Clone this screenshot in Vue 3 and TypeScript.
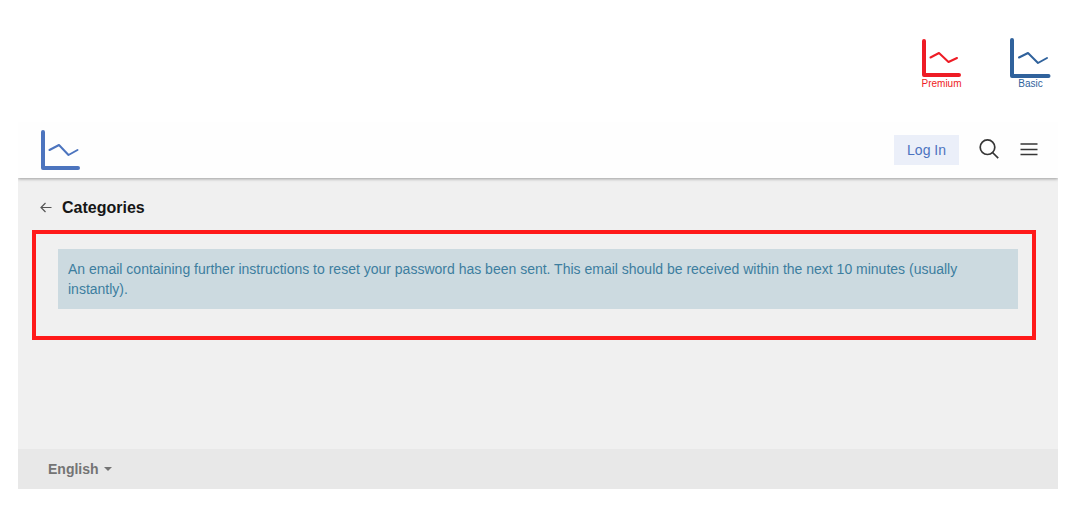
<script setup lang="ts">
import { ref } from 'vue'

interface Edition {
  name: string
  tone: string
  axes: string
  trend: string
}

const editions: Edition[] = [
  {
    name: 'Premium',
    tone: 'premium',
    axes: 'M3 3V37H38',
    trend: 'M9.5 19.5 18 15 27.5 24 36 20',
  },
  {
    name: 'Basic',
    tone: 'basic',
    axes: 'M2 2V38H38.5',
    trend: 'M9 19.5 18 15 28 25 37 20',
  },
]

const language = ref('English')
</script>

<template>
  <div class="page">
    <div class="editions">
      <figure v-for="e in editions" :key="e.name" class="edition" :class="e.tone">
        <svg class="chart" viewBox="0 0 41 41" aria-hidden="true">
          <path class="axes" :d="e.axes" />
          <path class="trend" :d="e.trend" />
        </svg>
        <figcaption>{{ e.name }}</figcaption>
      </figure>
    </div>

    <div class="site">
      <header class="bar">
        <a class="brand" href="#" aria-label="Home">
          <svg class="chart" viewBox="0 0 41 41" aria-hidden="true">
            <path class="axes" d="M2 2V38H37" />
            <path class="trend" d="M8.5 20 18 15 27.5 25 36.5 20" />
          </svg>
        </a>
        <div class="actions">
          <button class="login" type="button">Log In</button>
          <button class="icon" type="button" aria-label="Search">
            <svg viewBox="0 0 20 20" aria-hidden="true">
              <circle cx="8.5" cy="7.2" r="7.3" />
              <path d="M13.5 12.5 19.2 18.2" />
            </svg>
          </button>
          <button class="icon menu" type="button" aria-label="Menu">
            <svg viewBox="0 0 20 20" aria-hidden="true">
              <path d="M1.5 4H18.5M1.5 9.5H18.5M1.5 14.500H18.5" />
            </svg>
          </button>
        </div>
      </header>

      <main class="content">
        <div class="heading">
          <a class="back" href="#" aria-label="Back">
            <svg viewBox="0 0 12 12" aria-hidden="true">
              <path d="M11.5 5.5H1.500M5.500 1 1 5.500 5.500 10" />
            </svg>
          </a>
          <h1>Categories</h1>
        </div>
        <section class="highlight">
          <p class="notice" role="status">
            An email containing further instructions to reset your password has been sent. This
            email should be received within the next 10 minutes (usually instantly).
          </p>
        </section>
      </main>

      <footer class="footer">
        <label class="language">
          <select v-model="language" aria-label="Language">
            <option>English</option>
          </select>
          <svg viewBox="0 0 8 4" aria-hidden="true"><path d="M0 0H8L4 4Z" /></svg>
        </label>
      </footer>
    </div>
  </div>
</template>

<style>
body {
  margin: 0;
  background: #fff;
}
</style>

<style scoped>
.page {
  font-family: 'Liberation Sans', Arial, sans-serif;
  font-size: 14px;
  line-height: 20px;
}

.editions {
  display: flex;
  justify-content: flex-end;
  gap: 48px;
  padding: 38px 21px 33px;
}

.edition {
  width: 41px;
  margin: 0;
}

.edition figcaption {
  font-size: 10px;
  line-height: 10px;
  text-align: center;
}

.premium {
  color: #ee1c25;
}

.basic {
  color: #30629c;
}

.chart {
  display: block;
  width: 41px;
  height: 41px;
  fill: none;
  stroke: currentColor;
  stroke-linecap: round;
  stroke-linejoin: round;
}

.axes {
  stroke-width: 4;
}

.trend {
  stroke-width: 2;
}

.site {
  margin: 0 14px 0 18px;
}

.bar {
  position: relative;
  display: flex;
  align-items: center;
  justify-content: space-between;
  height: 56px;
  padding: 0 19px 0 23px;
  background: #fefefe;
  box-shadow: 0 1px 3px rgba(0, 0, 0, 0.35);
  clip-path: inset(0 0 -6px 0);
}

.brand {
  color: #4c74be;
}

.actions {
  display: flex;
  align-items: center;
  gap: 20px;
}

button {
  padding: 0;
  border: 0;
  background: none;
  font: inherit;
  cursor: pointer;
}

.login {
  height: 30px;
  padding: 0 13px;
  background: #ebeff9;
  color: #4c73c0;
}

.icon svg {
  display: block;
  width: 20px;
  height: 20px;
  overflow: visible;
  fill: none;
  stroke: #363636;
  stroke-width: 1.7;
}

.menu svg {
  stroke-width: 1.4;
}

.content {
  padding: 20px 22px 109px 14px;
  background: #f0f0f0;
}

.heading {
  display: flex;
  align-items: center;
  gap: 10px;
  padding: 0 8px;
}

.back svg {
  display: block;
  width: 12px;
  height: 12px;
  fill: none;
  stroke: #555;
  stroke-width: 1.2;
}

h1 {
  margin: 0;
  color: #161616;
  font-size: 16px;
  line-height: 20px;
}

.highlight {
  margin-top: 12px;
  padding: 15px 14px 27px 22px;
  border: 4px solid #ff1a1a;
}

.notice {
  margin: 0;
  padding: 10px;
  background: #ccdae0;
  color: #3d7e9f;
}

.footer {
  padding: 10px 30px;
  background: #e8e8e8;
}

.language {
  display: inline-flex;
  align-items: center;
  gap: 5px;
  height: 20px;
  color: #747474;
}

.language select {
  padding: 0;
  border: 0;
  appearance: none;
  background: none;
  color: inherit;
  font: inherit;
  font-weight: bold;
}

.language svg {
  width: 8px;
  height: 4px;
  fill: currentColor;
}
</style>
